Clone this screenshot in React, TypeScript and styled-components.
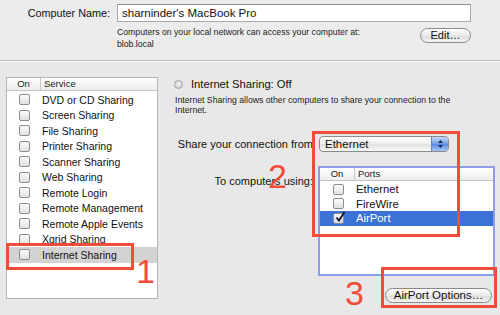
import styled, { createGlobalStyle } from "styled-components";

const GlobalStyle = createGlobalStyle`
	html, body {
		margin: 0;
		padding: 0;
		background: #e8e8e8;
	}
	body {
		font-family: "Liberation Sans", "DejaVu Sans", sans-serif;
		color: #111;
	}
`;

const Window = styled.div`
	position: relative;
	width: 500px;
	height: 315px;
	overflow: hidden;
	background: #e8e8e8;
`;

const TopSection = styled.div`
	height: 61px;
	background: #ececec;
	border-bottom: 1px solid #bdbdbd;
	box-shadow: 0 1px 0 #f7f7f7;
	display: grid;
	grid-template-columns: 110px 354px;
	column-gap: 7px;
	align-content: start;
	padding-top: 4px;
	box-sizing: border-box;
`;

const NameLabel = styled.div`
	font-size: 10.8px;
	text-align: right;
	line-height: 18px;
`;

const NameField = styled.div`
	height: 18px;
	box-sizing: border-box;
	background: #fff;
	border: 1px solid #a9a9a9;
	border-top-color: #8e8e8e;
	font-size: 11.5px;
	line-height: 16px;
	padding-left: 4px;
`;

const HelpRow = styled.div`
	grid-column: 2;
	display: flex;
	justify-content: space-between;
	align-items: flex-start;
	margin-top: 3px;
`;

const HelpText = styled.div`
	font-size: 8.7px;
	line-height: 12px;
	color: #222;
	padding-top: 1px;
`;

const PillButton = styled.div<{ $width: number; $size: number }>`
	width: ${(p) => p.$width}px;
	height: 15px;
	box-sizing: border-box;
	border: 1px solid #8a8a8a;
	border-radius: 8px;
	background: linear-gradient(#ffffff, #e9e9e9 50%, #dcdcdc 51%, #f4f4f4);
	font-size: ${(p) => p.$size}px;
	line-height: 13px;
	text-align: center;
	color: #111;
	margin-top: 3px;
`;

const Main = styled.div`
	display: flex;
	padding: 16px 0 0 6px;
	gap: 12px;
`;

const ServiceList = styled.div`
	width: 152px;
	height: 222px;
	box-sizing: border-box;
	background: #fff;
	border: 1px solid #b5b5b5;
	display: flex;
	flex-direction: column;
`;

const TableHeader = styled.div<{ $first: number }>`
	display: grid;
	grid-template-columns: ${(p) => p.$first}px 1fr;
	height: 12px;
	border-bottom: 1px solid #c6c6c6;
	background: linear-gradient(#ffffff, #ececec);
	font-size: 9.5px;
	line-height: 12px;
	color: #222;
	flex-shrink: 0;
`;

const HeaderCell = styled.div<{ $center?: boolean }>`
	text-align: ${(p) => (p.$center ? "center" : "left")};
	padding-left: ${(p) => (p.$center ? 0 : 3)}px;
	& + & {
		border-left: 1px solid #c6c6c6;
	}
`;

const ServiceRow = styled.div<{ $selected?: boolean }>`
	display: grid;
	grid-template-columns: 35px 1fr;
	align-items: center;
	height: 15.5px;
	font-size: 10.5px;
	background: ${(p) => (p.$selected ? "#d3d3d3" : "transparent")};
`;

const RowSpacer = styled.div`
	height: 1px;
`;

const CheckCell = styled.div`
	display: flex;
	justify-content: center;
`;

const Check = styled.div<{ $on?: boolean }>`
	width: 11px;
	height: 11px;
	box-sizing: border-box;
	border: 1px solid #8d8d8d;
	border-radius: 2px;
	background: ${(p) =>
		p.$on ? "linear-gradient(#f6f6ff, #c9d3f3)" : "linear-gradient(#fbfbfb, #e2e2e2)"};
	position: relative;
`;

const CellText = styled.div<{ $light?: boolean }>`
	color: ${(p) => (p.$light ? "#fff" : "#111")};
	white-space: nowrap;
`;

const Detail = styled.div`
	display: flex;
	flex-direction: column;
	width: 326px;
`;

const StatusRow = styled.div`
	display: flex;
	align-items: center;
	gap: 8px;
	padding-left: 4px;
	height: 14px;
	font-size: 11.2px;
`;

const StatusDot = styled.div`
	width: 7px;
	height: 7px;
	border-radius: 50%;
	border: 1px solid #a5a5a5;
	background: radial-gradient(circle at 50% 40%, #f4f4f4, #c4c4c4);
`;

const Description = styled.div`
	font-size: 8.7px;
	line-height: 10px;
	padding-left: 5px;
	margin-top: 4px;
	color: #222;
	white-space: nowrap;
`;

const FormGrid = styled.div`
	display: grid;
	grid-template-columns: 143px 1fr;
	column-gap: 6px;
	margin-top: 21px;
	align-items: start;
`;

const FormLabel = styled.div<{ $top: number }>`
	font-size: 11px;
	text-align: right;
	line-height: 14px;
	padding-top: ${(p) => p.$top}px;
	white-space: nowrap;
`;

const Popup = styled.div`
	width: 130px;
	height: 16px;
	box-sizing: border-box;
	border: 1px solid #8c8c8c;
	border-radius: 4px;
	background: linear-gradient(#ffffff, #ededed 50%, #e2e2e2 51%, #f6f6f6);
	display: flex;
	align-items: center;
	justify-content: space-between;
	font-size: 11.5px;
	padding-left: 5px;
	overflow: hidden;
`;

const Stepper = styled.div`
	width: 16px;
	height: 100%;
	background: linear-gradient(#c7d9f7, #6f9de8 50%, #5688e0 51%, #a8c6f4);
	border-left: 1px solid #6d86b8;
	display: flex;
	align-items: center;
	justify-content: center;
`;

const PortsTable = styled.div`
	width: 177px;
	height: 110px;
	margin-top: 14px;
	margin-left: -1px;
	box-sizing: border-box;
	background: #fff;
	border: 2px solid #8f9de6;
	display: flex;
	flex-direction: column;
`;

const PortRow = styled.div<{ $selected?: boolean }>`
	display: grid;
	grid-template-columns: 36px 1fr;
	align-items: center;
	height: 14.5px;
	font-size: 11.3px;
	background: ${(p) => (p.$selected ? "#3a72d6" : "transparent")};
`;

const ButtonRow = styled.div`
	display: flex;
	justify-content: flex-end;
	margin-top: 9px;
	padding-right: 4px;
`;

const Annotation = styled.div<{ $x: number; $y: number; $w: number; $h: number }>`
	position: absolute;
	left: ${(p) => p.$x}px;
	top: ${(p) => p.$y}px;
	width: ${(p) => p.$w}px;
	height: ${(p) => p.$h}px;
	box-sizing: border-box;
	border: 3px solid #f14c3a;
	pointer-events: none;
`;

const Marker = styled.div<{ $x: number; $y: number }>`
	position: absolute;
	left: ${(p) => p.$x}px;
	top: ${(p) => p.$y}px;
	font-family: "Liberation Sans", sans-serif;
	font-size: 34px;
	line-height: 34px;
	color: #f14c3a;
`;

const services = [
	"DVD or CD Sharing",
	"Screen Sharing",
	"File Sharing",
	"Printer Sharing",
	"Scanner Sharing",
	"Web Sharing",
	"Remote Login",
	"Remote Management",
	"Remote Apple Events",
	"Xgrid Sharing",
	"Internet Sharing",
];

const ports = [
	{ name: "Ethernet", on: false },
	{ name: "FireWire", on: false },
	{ name: "AirPort", on: true },
];

const Tick = () => (
	<svg width="11" height="11" viewBox="0 0 11 11" style={{ position: "absolute", left: 1, top: -3 }}>
		<path d="M1.5 6.5 L4 9.5 L9.5 1" fill="none" stroke="#111" strokeWidth="1.8" />
	</svg>
);

const Arrows = () => (
	<svg width="7" height="10" viewBox="0 0 7 10">
		<path d="M3.5 1 L6 4 L1 4 Z" fill="#1a2a50" />
		<path d="M3.5 9 L6 6 L1 6 Z" fill="#1a2a50" />
	</svg>
);

export default function App() {
	return (
		<Window>
			<GlobalStyle />
			<TopSection>
				<NameLabel>Computer Name:</NameLabel>
				<NameField>sharninder's MacBook Pro</NameField>
				<HelpRow>
					<HelpText>
						Computers on your local network can access your computer at:
						<br />
						blob.local
					</HelpText>
					<PillButton $width={51} $size={11}>
						Edit…
					</PillButton>
				</HelpRow>
			</TopSection>
			<Main>
				<ServiceList>
					<TableHeader $first={33}>
						<HeaderCell $center>On</HeaderCell>
						<HeaderCell>Service</HeaderCell>
					</TableHeader>
					<RowSpacer />
					{services.map((s) => (
						<ServiceRow key={s} $selected={s === "Internet Sharing"}>
							<CheckCell>
								<Check />
							</CheckCell>
							<CellText>{s}</CellText>
						</ServiceRow>
					))}
				</ServiceList>
				<Detail>
					<StatusRow>
						<StatusDot />
						Internet Sharing: Off
					</StatusRow>
					<Description>
						Internet Sharing allows other computers to share your connection to the
						<br />
						Internet.
					</Description>
					<FormGrid>
						<FormLabel $top={1}>Share your connection from</FormLabel>
						<Popup>
							Ethernet
							<Stepper>
								<Arrows />
							</Stepper>
						</Popup>
						<FormLabel $top={22}>To computers using:</FormLabel>
						<PortsTable>
							<TableHeader $first={34}>
								<HeaderCell $center>On</HeaderCell>
								<HeaderCell>Ports</HeaderCell>
							</TableHeader>
							<RowSpacer />
							{ports.map((p) => (
								<PortRow key={p.name} $selected={p.on}>
									<CheckCell>
										<Check $on={p.on}>{p.on && <Tick />}</Check>
									</CheckCell>
									<CellText $light={p.on}>{p.name}</CellText>
								</PortRow>
							))}
						</PortsTable>
					</FormGrid>
					<ButtonRow>
						<PillButton $width={107} $size={11.5}>
							AirPort Options…
						</PillButton>
					</ButtonRow>
				</Detail>
			</Main>
			<Annotation $x={6} $y={243} $w={128} $h={27} />
			<Marker $x={136} $y={254}>1</Marker>
			<Annotation $x={312} $y={131} $w={148} $h={106} />
			<Marker $x={268} $y={159}>2</Marker>
			<Annotation $x={381} $y={267} $w={116} $h={41} />
			<Marker $x={345} $y={276}>3</Marker>
		</Window>
	);
}
